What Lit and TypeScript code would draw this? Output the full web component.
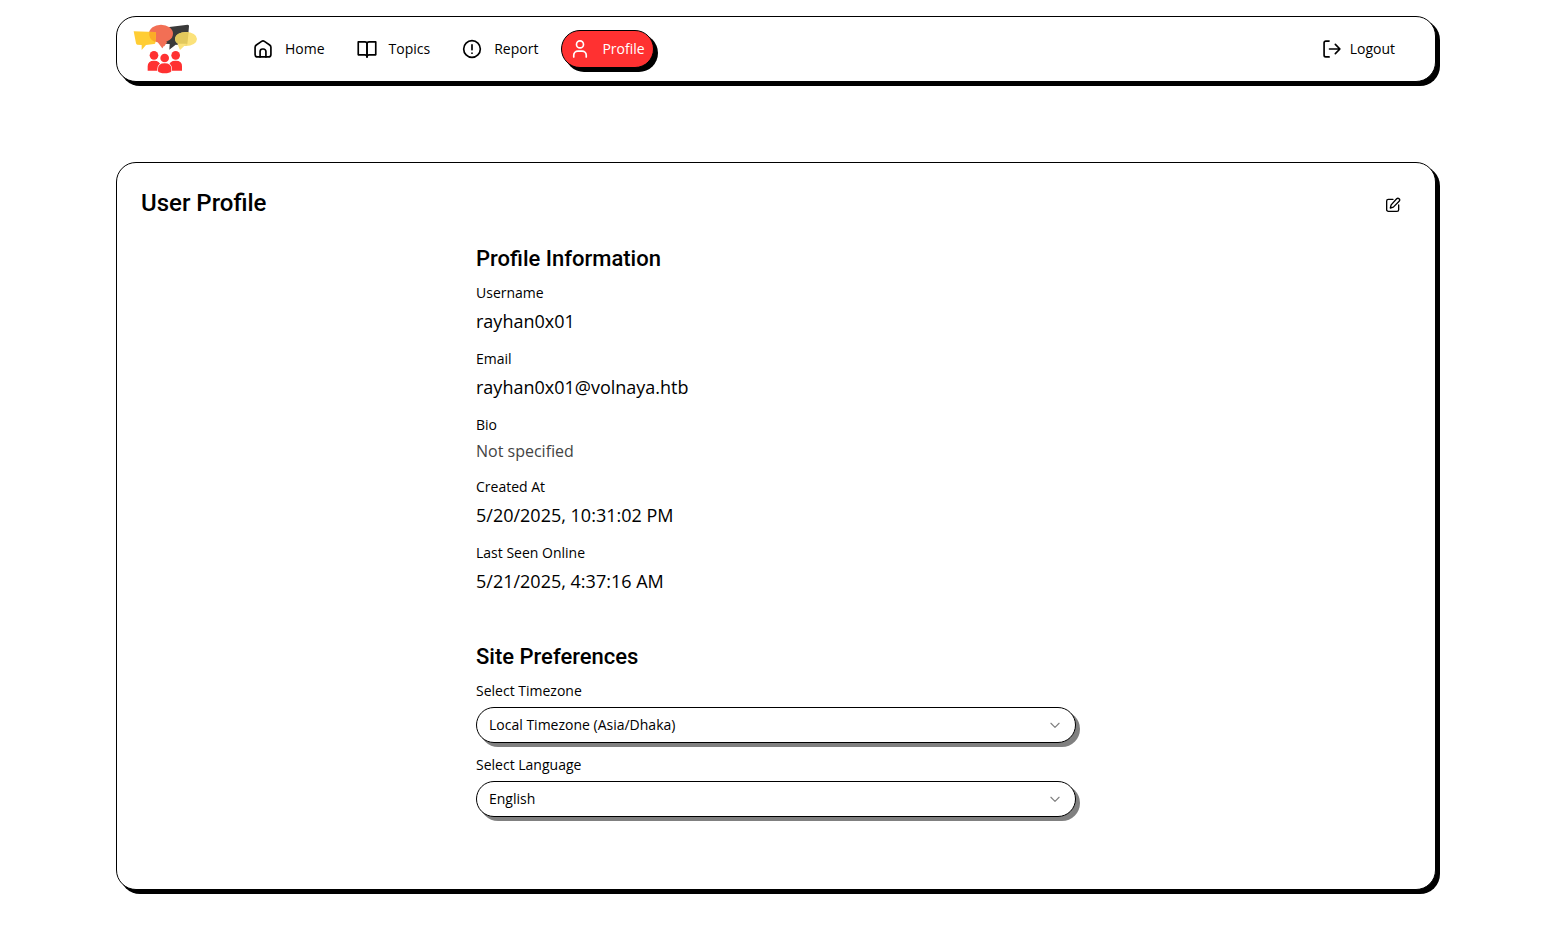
import { LitElement, html, css, svg } from "lit";
import { customElement, property } from "lit/decorators.js";

const icons = {
  home: svg`<path d="M2.500 10c0-1.300.5-2 1.500-2.800l6.300-4.300c1.200-.8 2.200-.8 3.400 0L20 7.200c1 .8 1.500 1.500 1.500 2.800v8.500a3 3 0 0 1-3 3h-13a3 3 0 0 1-3-3z"/><path d="M8.500 21.500V15a3 3 0 0 1 3-3h1a3 3 0 0 1 3 3v6.500"/>`,
  book: svg`<path d="M12 21.500V6a2.500 2.500 0 0 0-2.500-2.500H1.500V19h8a2.500 2.500 0 0 1 2.500 2.500z"/><path d="M12 21.500V6a2.500 2.500 0 0 1 2.500-2.500h8V19h-8a2.500 2.500 0 0 0-2.500 2.500z"/>`,
  alert: svg`<circle cx="12" cy="12" r="10"/><path d="M12 7v6M12 16.900v.1"/>`,
  user: svg`<circle cx="12" cy="6.500" r="4.200"/><path d="M4.500 21.500v-2a5 5 0 0 1 5-5h5a5 5 0 0 1 5 5v2"/>`,
  logout: svg`<path d="M8.500 2.500H4.500a2 2 0 0 0-2 2v15a2 2 0 0 0 2 2h4M9 12h12.500M16 6.500l5.500 5.500-5.500 5.500"/>`,
  edit: svg`<path d="M12 3.500H5a2.500 2.500 0 0 0-2.500 2.500v13A2.500 2.500 0 0 0 5 21.500h13a2.500 2.500 0 0 0 2.500-2.500v-7"/><path d="M17.500 2.700a2.500 2.500 0 0 1 3.700 3.600L12.500 15.200 8 16.500l1.200-4.700z"/>`,
  chevron: svg`<path d="M5 9l7 7 7-7"/>`,
};

@customElement("line-icon")
class LineIcon extends LitElement {
  static styles = css`
    :host { display: block; flex: none; width: 20px; height: 20px; }
    svg { display: block; width: 100%; height: 100%; fill: none; stroke: currentColor;
      stroke-width: 2; stroke-linecap: round; stroke-linejoin: round; }
  `;
  @property() name: keyof typeof icons = "home";
  render() {
    return html`<svg viewBox="0 0 24 24" aria-hidden="true">${icons[this.name]}</svg>`;
  }
}

@customElement("community-logo")
class CommunityLogo extends LitElement {
  static styles = css`:host { display: block; flex: none; } svg { display: block; width: 64px; height: 50px; }`;
  render() {
    return html`<svg viewBox="9 13 192 150" role="img" aria-label="Community">
      <path fill="#3a3a3a" d="M112 23 173 15q5 0 4 5l-5 55q0 3-4 3l-31-3-19 15 1-17-14-1z"/>
      <ellipse cx="93" cy="42" rx="36" ry="27" fill="#f26f55"/>
      <path fill="#f26f55" d="M82 66h30l-14 21z"/>
      <path fill="#ffcd34" d="m11 35 63 2q5 0 4 5l-2 28q0 3-4 3l-24 3-13 15v-15l-13-1q-3 0-4-4z"/>
      <path fill="#fbac26" d="M58 37h16q5 0 4 5l-2 26Q54 58 58 37z"/>
      <ellipse cx="168" cy="58" rx="33" ry="21" fill="#fbe27a"/>
      <path fill="#e2c85c" d="M176 37q-41 0-41 21 0 12 19 18l18-2z"/>
      <path fill="#fbe27a" d="M142 72h28l-20 19z"/>
      <path fill="#fff" d="M58 110 60 92l11 1 9-8 12 9 10-16 12 17 12-9 6 8 12-1 4 17z"/>
      <g fill="#ff3131">
        <circle cx="72" cy="107" r="13"/><circle cx="137" cy="107" r="13"/>
        <path d="M53 153v-13q0-17 19-17t20 17v13zM117 153v-13q0-17 20-17t19 17v13z"/>
      </g>
      <g fill="#ff3131" stroke="#fff" stroke-width="4" paint-order="stroke">
        <circle cx="104" cy="115" r="13"/>
        <path d="M84 155v-7q0-17 20-17t20 17v7q-5 6-20 6t-20-6z"/>
      </g>
    </svg>`;
  }
}

@customElement("app-root")
class AppRoot extends LitElement {
  static styles = css`
    :host {
      display: block; box-sizing: border-box; padding: 16px 119px 40px 116px;
      font-family: "Open Sans", sans-serif; font-size: 14px; line-height: 20px; color: #000;
    }
    * { box-sizing: border-box; }
    .panel {
      background: #fff; border: 1px solid #000; border-radius: 20px;
      box-shadow: 4px 4px #000;
    }
    .bar { display: flex; align-items: center; height: 66px; padding: 0 40px 0 16px; }
    .links { display: flex; gap: 14px; margin-left: 47px; flex: 1; }
    .link, .logout {
      display: flex; align-items: center; color: inherit; text-decoration: none;
      font: inherit; background: none; border: 0; cursor: pointer;
    }
    .link { gap: 12px; height: 38px; padding: 0 8px; border: 1px solid transparent; border-radius: 19px; }
    .link.active {
      background: #ff3131; color: #fff; border-color: #000;
      box-shadow: 4px 4px #000;
    }
    .logout { gap: 8px; padding: 0; }
    .card { margin-top: 80px; padding: 24px 24px 60px; }
    .head { display: flex; align-items: flex-start; justify-content: space-between; height: 32px; }
    h1, h2, dl, dd { margin: 0; }
    h1, h2 { font-family: Roboto, sans-serif; font-weight: 500; line-height: 32px; }
    h1 { font-size: 24px; }
    h2 { font-size: 22px; margin-bottom: 8px; }
    .edit { display: grid; place-items: center; width: 36px; height: 36px; padding: 0; border: 0;
      background: none; color: inherit; cursor: pointer; }
    .edit line-icon { width: 16px; height: 16px; }
    .body { max-width: 600px; margin: 24px auto 0; }
    .item { padding-bottom: 14px; }
    dd { margin-top: 4px; font-size: 18px; line-height: 28px; }
    dd.empty { font-size: 16px; line-height: 24px; color: #444; }
    .prefs { margin-top: 32px; }
    label { display: block; margin-bottom: 6px; }
    .field { position: relative; margin-bottom: 12px; }
    select {
      display: block; width: 100%; height: 36px; padding: 0 40px 0 12px; appearance: none;
      font: inherit; color: inherit; background: #fff; border: 1px solid #000; border-radius: 18px;
      box-shadow: 4px 4px #808080;
    }
    .field line-icon { position: absolute; right: 14px; top: 11px; width: 14px; height: 14px;
      color: #808080; pointer-events: none; }
  `;

  private links = [
    { icon: "home", text: "Home" },
    { icon: "book", text: "Topics" },
    { icon: "alert", text: "Report" },
    { icon: "user", text: "Profile", active: true },
  ];

  private info = [
    ["Username", "rayhan0x01"],
    ["Email", "rayhan0x01@volnaya.htb"],
    ["Bio", ""],
    ["Created At", "5/20/2025, 10:31:02 PM"],
    ["Last Seen Online", "5/21/2025, 4:37:16 AM"],
  ];

  private prefs = [
    ["timezone", "Select Timezone", "Local Timezone (Asia/Dhaka)"],
    ["language", "Select Language", "English"],
  ];

  render() {
    return html`
      <header class="panel bar">
        <community-logo></community-logo>
        <nav class="links">
          ${this.links.map((l) => html`<a class="link ${l.active ? "active" : ""}" href="#"
            ><line-icon name=${l.icon}></line-icon><span>${l.text}</span></a>`)}
        </nav>
        <button class="logout"><line-icon name="logout"></line-icon><span>Logout</span></button>
      </header>
      <main class="panel card">
        <div class="head">
          <h1>User Profile</h1>
          <button class="edit" aria-label="Edit"><line-icon name="edit"></line-icon></button>
        </div>
        <div class="body">
          <section>
            <h2>Profile Information</h2>
            <dl>
              ${this.info.map(([k, v]) => html`<div class="item"><dt>${k}</dt>
                <dd class=${v ? "" : "empty"}>${v || "Not specified"}</dd></div>`)}
            </dl>
          </section>
          <section class="prefs">
            <h2>Site Preferences</h2>
            ${this.prefs.map(([id, label, value]) => html`
              <label for=${id}>${label}</label>
              <div class="field">
                <select id=${id}><option>${value}</option></select>
                <line-icon name="chevron"></line-icon>
              </div>`)}
          </section>
        </div>
      </main>
    `;
  }
}
